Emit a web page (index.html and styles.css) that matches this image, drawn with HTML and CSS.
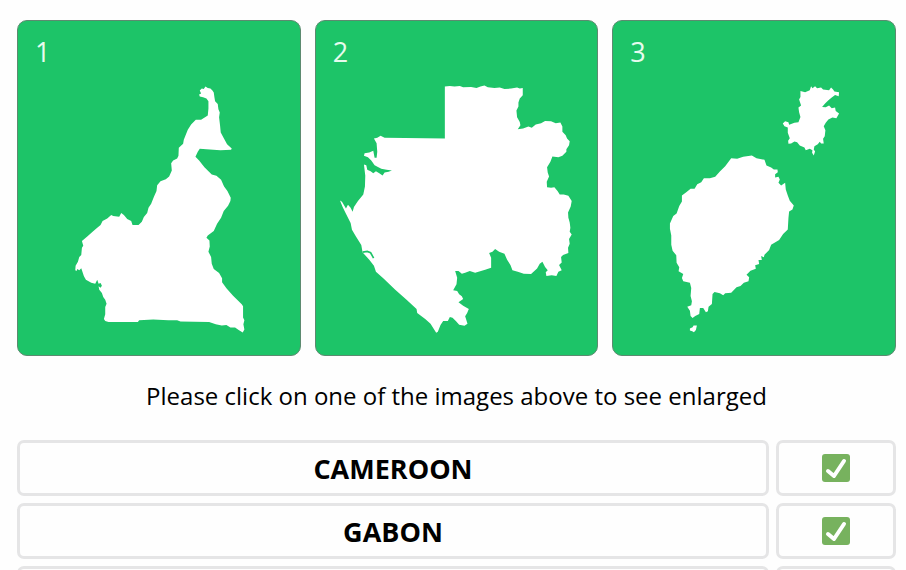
FILE: index.html
```html
<!DOCTYPE html>
<html lang="en">
<head>
<meta charset="utf-8">
<meta name="viewport" content="width=device-width, initial-scale=1">
<title>Country shapes</title>
<link rel="stylesheet" href="styles.css">
</head>
<body>
<main class="game">
  <div class="cards">
    <button class="card" type="button">
      <span class="card-number">1</span>
      <svg class="shape" viewBox="-126 -147 846 1002" aria-hidden="true">
        <path d="M418 74 L424 71 L420 62 L426 56 L432 57 L437 50 L444 54 L452 56 L458 62 L462 68 L464 82 L466 94 L474 102 L476 118 L480 128 L478 142 L481 168 L483 188 L491 203 L502 223 L516 236 L514 240 L482 241 L440 238 L420 237 L414 246 L407 261 L418 272 L434 292 L456 314 L470 318 L484 330 L493 350 L503 364 L513 384 L512 394 L505 408 L492 424 L484 444 L472 462 L462 484 L444 497 L440 504 L449 512 L450 530 L446 546 L454 562 L456 582 L462 598 L478 610 L487 626 L487 638 L500 656 L520 678 L546 704 L550 710 L550 744 L554 752 L551 764 L554 780 L549 789 L538 782 L526 774 L512 774 L500 766 L486 768 L468 764 L448 757 L362 756 L352 752 L326 752 L280 750 L238 752 L234 757 L146 757 L136 754 L132 748 L136 734 L136 712 L140 702 L136 690 L130 682 L126 670 L118 660 L116 650 L122 654 L126 648 L122 640 L116 642 L112 630 L106 642 L94 639 L78 630 L72 620 L68 608 L64 596 L58 602 L52 598 L50 604 L46 602 L47 588 L54 576 L58 562 L64 556 L66 534 L70 528 L66 514 L82 500 L98 486 L112 474 L122 466 L128 454 L142 446 L154 436 L160 439 L178 441 L184 430 L192 436 L202 448 L214 454 L218 466 L236 466 L246 456 L252 442 L262 430 L266 414 L274 402 L282 382 L290 364 L292 346 L302 334 L318 328 L328 320 L336 302 L334 280 L340 272 L352 266 L356 258 L357 234 L370 222 L372 210 L384 180 L394 164 L408 150 L424 150 L444 137 L446 116 L446 94 L440 86 L430 82 L420 80 Z"/>
      </svg>
    </button>
    <button class="card" type="button">
      <span class="card-number">2</span>
      <svg class="shape" viewBox="-42 -147 846 1002" aria-hidden="true">
        <path d="M345 50 L360 48 L374 50 L390 48 L400 52 L424 51 L440 54 L452 50 L464 47 L474 52 L494 54 L510 53 L524 57 L544 56 L562 53 L570 56 L579 54 L579 76 L570 86 L566 98 L566 110 L560 122 L562 142 L570 156 L572 166 L564 178 L580 176 L596 170 L606 174 L618 164 L634 160 L646 153 L664 154 L678 160 L692 158 L698 170 L698 186 L708 196 L712 206 L720 214 L718 226 L710 238 L710 246 L698 258 L686 262 L668 260 L662 276 L652 292 L654 308 L658 320 L651 336 L652 352 L664 354 L674 352 L684 364 L690 374 L702 374 L716 378 L726 394 L723 410 L715 428 L716 444 L720 458 L722 474 L720 486 L726 494 L718 508 L720 522 L715 534 L716 550 L700 556 L694 562 L696 578 L688 586 L696 602 L686 606 L680 619 L666 617 L650 619 L648 608 L654 602 L646 592 L638 576 L630 582 L622 596 L604 613 L582 612 L564 606 L548 602 L542 586 L532 570 L524 552 L508 546 L496 538 L488 546 L478 550 L484 564 L484 594 L466 600 L436 609 L420 604 L406 609 L396 612 L386 604 L376 604 L382 624 L380 644 L370 662 L382 664 L388 674 L396 680 L400 688 L386 698 L400 708 L417 718 L412 730 L406 740 L413 762 L404 768 L388 765 L378 754 L368 744 L360 742 L354 754 L340 754 L332 766 L324 786 L319 789 L302 762 L286 748 L262 730 L260 718 L230 690 L196 660 L160 626 L138 606 L132 588 L118 570 L98 548 L94 526 L78 500 L66 480 L62 460 L48 432 L38 412 L30 392 L36 396 L48 416 L54 405 L62 414 L68 426 L72 412 L84 394 L100 374 L105 350 L106 318 L102 284 L109 286 L112 300 L122 304 L130 310 L138 304 L148 310 L158 317 L164 308 L176 306 L186 302 L170 300 L154 297 L134 286 L124 272 L114 262 L102 258 L104 250 L118 248 L130 243 L134 264 L140 264 L142 246 L140 220 L132 206 L142 204 L152 198 L164 204 L345 206 Z"/>
        <path class="inlet" d="M98 547 L112 545 L122 549 L131 565"/>
      </svg>
    </button>
    <button class="card" type="button">
      <span class="card-number">3</span>
      <svg class="shape" viewBox="-141 -162 846 1002" aria-hidden="true">
        <path d="M422 48 L436 52 L450 46 L454 34 L458 40 L466 34 L472 40 L484 38 L490 44 L508 46 L514 38 L520 44 L524 50 L538 52 L537 64 L526 60 L516 68 L506 76 L496 86 L487 96 L498 97 L508 92 L516 100 L526 98 L528 108 L538 116 L530 130 L518 128 L506 134 L498 144 L492 154 L497 166 L495 184 L490 192 L492 206 L484 206 L480 201 L474 208 L464 214 L462 224 L466 230 L462 242 L457 234 L458 226 L450 222 L438 226 L434 218 L420 212 L412 202 L404 200 L394 206 L386 207 L385 198 L390 190 L384 174 L384 158 L374 154 L369 146 L376 139 L386 142 L388 150 L404 144 L416 142 L422 126 L418 112 L416 98 L424 92 L418 74 L422 66 Z"/>
        <path d="M214 250 L232 252 L250 246 L276 242 L290 250 L314 255 L320 272 L334 278 L342 284 L353 284 L354 292 L346 298 L346 308 L356 306 L360 314 L356 324 L364 332 L376 324 L378 344 L384 362 L390 378 L402 392 L398 404 L388 410 L386 430 L384 464 L370 478 L358 496 L334 510 L328 526 L314 540 L312 548 L304 544 L306 556 L296 556 L298 568 L286 572 L288 582 L272 588 L260 600 L268 608 L266 620 L252 624 L242 634 L230 638 L214 654 L196 656 L190 662 L180 656 L164 652 L158 658 L156 688 L146 696 L144 710 L138 713 L130 700 L120 700 L118 718 L106 724 L98 730 L92 724 L90 708 L82 696 L94 692 L96 680 L92 664 L94 640 L90 624 L70 620 L66 610 L70 598 L56 590 L58 578 L50 564 L49 542 L38 528 L34 510 L34 482 L30 462 L30 446 L40 424 L50 416 L58 394 L66 380 L66 362 L80 352 L92 342 L104 342 L112 328 L124 322 L132 310 L150 310 L166 306 L180 290 L196 274 Z"/>
        <path d="M90 762 L98 758 L101 753 L111 753 L108 766 L102 773 L97 770 L90 768 Z"/>
      </svg>
    </button>
  </div>
  <p class="hint">Please click on one of the images above to see enlarged</p>
  <ul class="answers">
    <li class="answer">
      <span class="cell name">CAMEROON</span>
      <span class="cell"><svg class="check" viewBox="0 0 28 28" role="img" aria-label="Correct"><rect width="28" height="28" rx="3"/><path d="M6 17 L12 22 L22 7"/></svg></span>
    </li>
    <li class="answer">
      <span class="cell name">GABON</span>
      <span class="cell"><svg class="check" viewBox="0 0 28 28" role="img" aria-label="Correct"><rect width="28" height="28" rx="3"/><path d="M6 17 L12 22 L22 7"/></svg></span>
    </li>
    <li class="answer">
      <span class="cell name"></span>
      <span class="cell"></span>
    </li>
  </ul>
</main>
</body>
</html>
```
FILE: styles.css
```css
* {
  box-sizing: border-box;
}

body {
  margin: 0;
  height: 100vh;
  overflow: hidden;
  background: #fefefe;
  color: #000;
  font-family: "Open Sans", "Noto Sans", sans-serif;
}

.game {
  padding: 20px 10px 0 17px;
}

.cards {
  display: grid;
  grid-template-columns: repeat(3, 1fr);
  gap: 14px;
}

.card {
  display: grid;
  padding: 0;
  border: 1px solid #5d8a70;
  border-radius: 10px;
  background: #1dc468;
  color: #e6fbee;
  font: inherit;
  text-align: left;
  cursor: pointer;
}

.card-number,
.shape {
  grid-area: 1 / 1;
}

.card-number {
  padding: 11px 17px;
  font-size: 27px;
  line-height: 40px;
}

.shape {
  display: block;
  width: 100%;
  fill: #fff;
}

.inlet {
  fill: none;
  stroke: #1dc468;
  stroke-width: 5;
}

.hint {
  margin: 20px 0 24px;
  font-size: 24px;
  line-height: 40px;
  text-align: center;
}

.answers {
  display: grid;
  gap: 7px;
  margin: 0;
  padding: 0;
  list-style: none;
}

.answer {
  display: grid;
  grid-template-columns: 1fr 120px;
  gap: 7px;
}

.cell {
  display: flex;
  align-items: center;
  justify-content: center;
  height: 56px;
  border: 3px solid #e5e5e6;
  border-radius: 7px;
}

.name {
  padding-top: 2px;
  font-size: 27px;
  font-weight: 700;
}

.check {
  width: 28px;
  height: 28px;
  fill: #77b25e;
}

.check path {
  fill: none;
  stroke: #fff;
  stroke-width: 4;
  stroke-linecap: round;
  stroke-linejoin: round;
}
```
